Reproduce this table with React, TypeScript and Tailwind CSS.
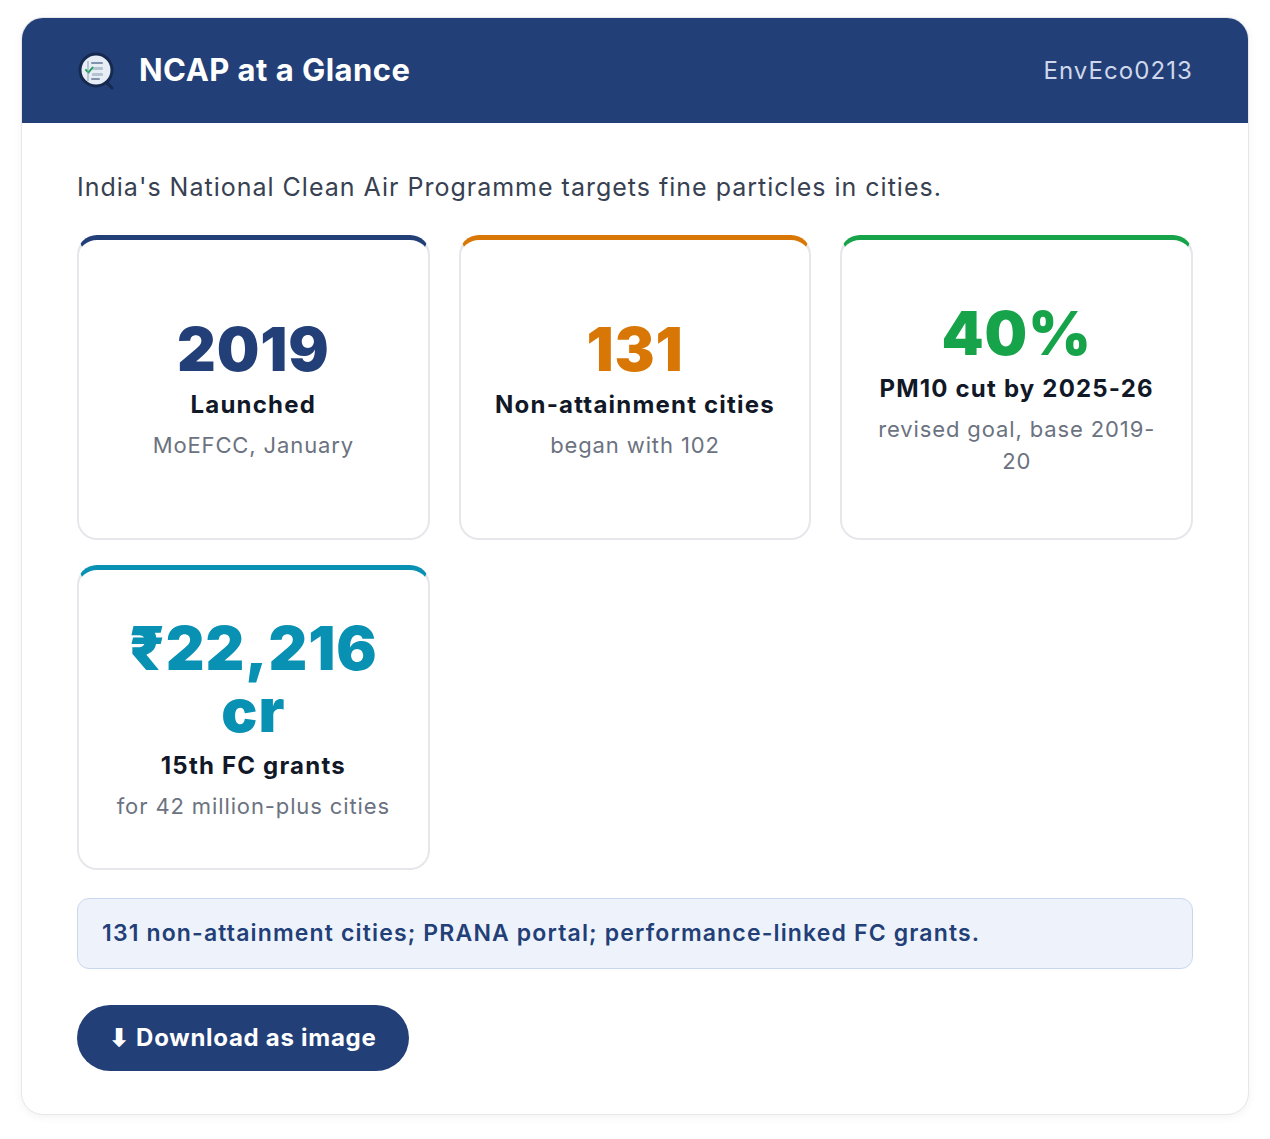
import React from 'react';

const font = { fontFamily: 'Inter, "Noto Sans", sans-serif' };

type Stat = { value: string; label: string; sub: string; color: string; bar: string };

const stats: Stat[] = [
  { value: '2019', label: 'Launched', sub: 'MoEFCC, January', color: 'text-[#233f78]', bar: 'border-t-[#233f78]' },
  { value: '131', label: 'Non-attainment cities', sub: 'began with 102', color: 'text-[#d97706]', bar: 'border-t-[#d97706]' },
  { value: '40%', label: 'PM10 cut by 2025-26', sub: 'revised goal, base 2019-20', color: 'text-[#16a34a]', bar: 'border-t-[#16a34a]' },
  { value: '₹22,216 cr', label: '15th FC grants', sub: 'for 42 million-plus cities', color: 'text-[#0891b2]', bar: 'border-t-[#0891b2]' },
];

const Logo = () => (
  <svg width="40" height="42" viewBox="0 0 40 42">
    <line x1="28" y1="31" x2="35" y2="38" stroke="#16294f" strokeWidth="3" strokeLinecap="round" />
    <circle cx="19" cy="20" r="16" fill="#e6edf4" stroke="#16294f" strokeWidth="3" />
    <rect x="14" y="12" width="12" height="2" rx="1" fill="#7f93ad" />
    <rect x="15" y="17" width="11" height="3" rx="1" fill="#b5c2d2" />
    <rect x="15" y="23" width="11" height="3" rx="1" fill="#b5c2d2" />
    <rect x="14" y="28" width="9" height="2" rx="1" fill="#7f93ad" />
    <path d="M9 20 l2.5 2.5 l4 -5" stroke="#22a05a" strokeWidth="2" fill="none" strokeLinecap="round" />
    <line x1="11" y1="11" x2="11" y2="31" stroke="#8aa0bb" strokeWidth="1" />
  </svg>
);

const StatCard = ({ s }: { s: Stat }) => (
  <div className={`h-[305px] rounded-[20px] border-2 border-[#e5e7eb] border-t-[5px] ${s.bar} bg-white px-7 flex flex-col items-center justify-center text-center`}>
    <div className={`text-[60px] font-black leading-[62px] tracking-[0.015em] ${s.color}`}>{s.value}</div>
    <div className="mt-[8px] text-[24px] font-bold leading-[34px] tracking-[0.05em] text-[#111827]">{s.label}</div>
    <div className="mt-[7px] text-[22px] leading-[32px] tracking-[0.04em] text-[#6b7280]">{s.sub}</div>
  </div>
);

export default function App() {
  return (
    <div className="min-h-screen bg-white pt-[17px] px-[21px]" style={font}>
      <div className="rounded-[22px] border border-[#e5e7eb] bg-white shadow-[0_2px_10px_rgba(0,0,0,0.05)] overflow-hidden">
        <header className="h-[105px] bg-[#233f78] pl-[55px] pr-[55px] flex items-center justify-between">
          <div className="flex items-center gap-[22px]">
            <Logo />
            <span className="text-[31px] font-bold text-white tracking-[0.015em]">NCAP at a Glance</span>
          </div>
          <span className="text-[24px] text-[#cfd8ea] tracking-[0.045em]">EnvEco0213</span>
        </header>

        <div className="px-[55px] pt-[47px] pb-[43px]">
          <p className="text-[25px] leading-[1.4] tracking-[0.04em] text-[#374151]">
            India's National Clean Air Programme targets fine particles in cities.
          </p>

          <div className="mt-[30px] grid grid-cols-3 gap-x-[29px] gap-y-[25px]">
            {stats.map(s => (
              <StatCard key={s.value} s={s} />
            ))}
          </div>

          <div className="mt-[28px] h-[71px] rounded-[12px] border border-[#c9d7ee] bg-[#eef3fb] px-[24px] flex items-center">
            <span className="text-[23px] font-semibold tracking-[0.05em] text-[#233f78]">
              131 non-attainment cities; PRANA portal; performance-linked FC grants.
            </span>
          </div>

          <button className="mt-[36px] h-[66px] rounded-full bg-[#233f78] px-[32px] text-[24px] font-bold tracking-[0.03em] text-white flex items-center">
            ⬇ Download as image
          </button>
        </div>
      </div>
    </div>
  );
}
